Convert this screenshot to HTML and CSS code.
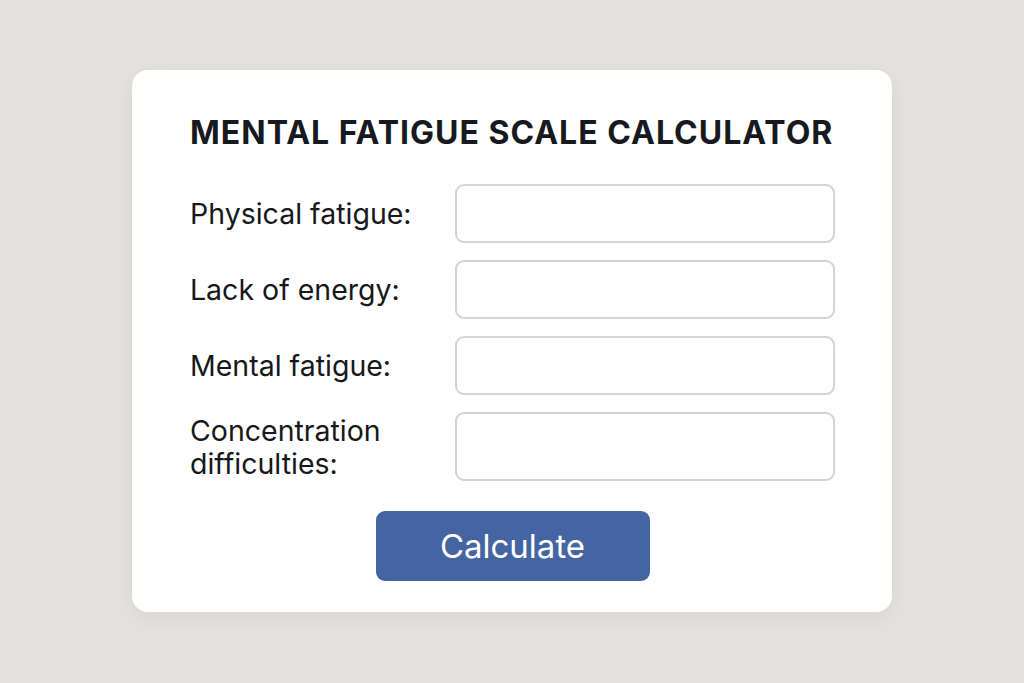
FILE: index.html
```html
<!doctype html>
<html lang="en">
  <head>
    <meta charset="UTF-8" />
    <meta name="viewport" content="width=device-width, initial-scale=1.0" />
    <title>Mental Fatigue Scale Calculator</title>
    <link rel="stylesheet" href="styles.css">
  </head>
  <body>
    <div class="card">
      <h1>MENTAL FATIGUE SCALE CALCULATOR</h1>

      <form class="mfs-form">
        <label for="physical">Physical fatigue:</label>
        <input type="text" id="physical" />

        <label for="energy">Lack of energy:</label>
        <input type="text" id="energy" />

        <label for="mental">Mental fatigue:</label>
        <input type="text" id="mental" />

        <label for="concentration">Concentration<br />difficulties:</label>
        <input type="text" id="concentration" class="tall" />
      </form>

      <div class="actions">
        <button type="button">Calculate</button>
      </div>
    </div>
  </body>
</html>
```

FILE: styles.css
```css
body {
  font-family: Inter, 'Liberation Sans', Arial, sans-serif;
  margin: 0;
  height: 100vh;
  overflow: hidden;
  background-color: #e4e2df;
  display: flex;
  justify-content: center;
  align-items: flex-start;
}
.card {
  width: 760px;
  height: 542px;
  box-sizing: border-box;
  margin-top: 70px;
  padding: 47px 57px 0 58px;
  background-color: #fff;
  border-radius: 16px;
  box-shadow: 0 6px 24px rgba(0, 0, 0, 0.06);
}
h1 {
  margin: 0 0 35px;
  font-size: 32px;
  font-weight: 700;
  letter-spacing: 1px;
  line-height: 32px;
  color: #161a20;
  white-space: nowrap;
}
.mfs-form {
  display: grid;
  grid-template-columns: 265px 380px;
  row-gap: 17px;
  align-items: center;
}
.mfs-form label {
  font-size: 28.5px;
  line-height: 33px;
  color: #16181b;
}
.mfs-form input {
  width: 380px;
  height: 59px;
  box-sizing: border-box;
  border: 2px solid #d4d4d4;
  border-radius: 9px;
  background-color: #fff;
  font-size: 22px;
  padding: 0 14px;
}
.mfs-form input.tall {
  height: 69px;
}
.actions {
  display: flex;
  justify-content: center;
  margin-top: 30px;
}
button {
  width: 274px;
  height: 70px;
  font-family: inherit;
  font-size: 33px;
  border: none;
  background-color: #4465a1;
  color: #fff;
  border-radius: 9px;
  cursor: pointer;
}
```
